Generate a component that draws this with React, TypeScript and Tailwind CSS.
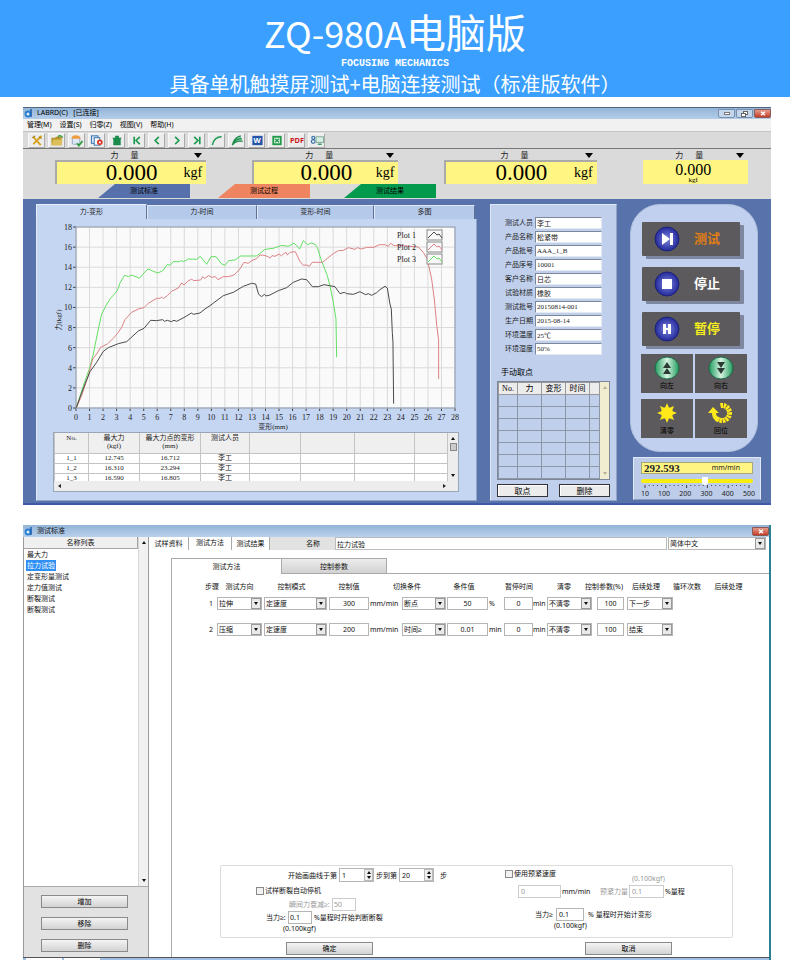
import { useState } from 'react';
import type { ReactNode } from 'react';
import clsx from 'clsx';

const SANS = "font-['Noto_Sans','Liberation_Sans','Noto_Sans_CJK_SC',sans-serif]";
const SERIF = "font-['Liberation_Serif','Noto_Sans_CJK_SC',serif]";

// Curve samples, three units per chart pixel
const PLOTS = [
  {
    name: 'Plot 1',
    color: '#4a4a4a',
    points:
      '139,626 150,595 165,555 180,518 200,490 220,457 235,446 265,434 290,428 325,396 342,388 362,364 380,365 398,362 404,367 412,364 424,368 432,364 440,367 465,354 484,342 490,346 510,342 525,330 540,320 580,290 610,280 640,262 665,253 677,255 686,286 695,293 703,286 708,291 720,288 745,275 770,266 790,250 815,240 830,242 847,263 865,263 882,257 915,263 930,284 943,280 950,284 970,286 990,278 1007,287 1015,284 1025,289 1040,281 1050,272 1065,262 1072,267 1080,315 1084,330 1087,400 1089,430 1091,614',
  },
  {
    name: 'Plot 2',
    color: '#dc8186',
    points:
      '139,626 155,590 175,530 188,480 200,465 212,445 232,435 250,418 265,400 275,385 285,362 305,340 325,330 342,326 355,313 380,298 390,298 395,294 400,299 412,290 425,277 445,267 455,252 462,258 472,248 485,240 490,245 512,243 518,233 524,238 536,230 545,235 556,233 564,242 580,233 595,233 612,228 630,210 642,190 655,193 665,185 680,179 690,168 702,169 715,173 720,178 726,170 735,172 748,165 754,171 760,165 768,160 772,168 780,160 796,158 810,187 820,199 830,198 838,202 847,190 878,190 892,178 910,164 925,155 940,154 955,146 975,151 982,146 995,150 1010,145 1032,145 1048,137 1065,137 1075,142 1082,133 1092,140 1120,140 1165,144 1180,160 1192,180 1205,240 1213,300 1220,375 1226,425 1226,540',
  },
  {
    name: 'Plot 3',
    color: '#62e062',
    points:
      '139,626 160,560 178,510 190,465 205,390 215,345 228,320 240,300 262,275 270,252 284,229 296,233 303,228 318,233 328,238 342,222 354,210 370,217 384,222 400,214 412,196 420,199 430,188 450,188 453,184 460,188 475,180 500,181 511,172 530,196 543,173 558,173 575,195 585,199 596,185 615,183 632,171 680,171 705,151 730,148 755,139 775,142 792,132 809,150 820,125 833,137 844,132 857,137 862,145 872,178 892,230 900,260 910,310 918,360 920,475',
  },
];

const RESULTS = [
  ['1_1', '12.745', '16.712', '李工'],
  ['1_2', '16.310', '23.294', '李工'],
  ['1_3', '16.590', '16.805', '李工'],
];

const FIELDS = [
  ['测试人员', '李工'],
  ['产品名称', '松紧带'],
  ['产品批号', 'AAA_1_B'],
  ['产品序号', '10001'],
  ['客户名称', '日芯'],
  ['试验材质', '橡胶'],
  ['测试批号', '20150814-001'],
  ['生产日期', '2015-08-14'],
  ['环境温度', '25℃'],
  ['环境湿度', '50%'],
];

const STANDARDS = ['最大力', '拉力试验', '定变形量测试', '定力值测试', '断裂测试', '断裂测试'];

const STEPS = [
  { dir: '拉伸', mode: '定速度', value: '300', cond: '断点', condValue: '50', condUnit: '%', pause: '0', next: '下一步' },
  { dir: '压缩', mode: '定速度', value: '200', cond: '时间≥', condValue: '0.01', condUnit: 'min', pause: '0', next: '结束' },
];

const STEP_HEADS = ['步骤', '测试方向', '控制模式', '控制值', '切换条件', '条件值', '暂停时间', '清零', '控制参数(%)', '后续处理', '循环次数', '后续处理'];

function AppIcon() {
  return (
    <svg viewBox="0 0 9 9" className="h-[9px] w-[9px] shrink-0">
      <circle cx="4" cy="5" r="3.4" fill="#2c7fd0" />
      <circle cx="4" cy="5" r="1.5" fill="#d9ecfa" />
      <path d="M7 0v8" stroke="#1c5fae" strokeWidth="1.5" />
    </svg>
  );
}

function CloseButton() {
  return (
    <button aria-label="关闭" className="flex h-[9px] w-[17px] items-center justify-center rounded-b-[2px] border border-[#8c5a55] bg-linear-to-b from-[#e39a8c] to-[#c43a26]">
      <svg viewBox="0 0 6 5" className="h-[5px] w-[6px]">
        <path d="M1 .7l4 3.6M5 .7L1 4.3" stroke="#fff" strokeWidth="1.4" />
      </svg>
    </button>
  );
}

const TOOL_ICONS: { label: string; icon: ReactNode }[] = [
  {
    label: '工具',
    icon: (
      <>
        <path d="M3 3l8 9M12 2l-9 9" stroke="#d8a21c" strokeWidth="2" />
        <path d="M2 4l3-2M9 3l3 2" stroke="#a87a10" strokeWidth="1.2" />
      </>
    ),
  },
  {
    label: '打开',
    icon: (
      <>
        <path d="M1 4h4l1-1h6v9H1z" fill="#b8942c" />
        <path d="M1 12l2-6h10l-1 6z" fill="#dcbf58" />
        <path d="M8 3c2-2 4-1 5 1" stroke="#3a9a3a" fill="none" strokeWidth="1.6" />
      </>
    ),
  },
  {
    label: '检查',
    icon: (
      <>
        <rect x="2" y="3" width="8" height="8" rx="1" fill="#dfe9f5" stroke="#8ea6bf" />
        <path d="M1 5c0-5 9-5 10 0z" fill="#ee9c3d" />
        <path d="M7 10l2 2.500 4-5" stroke="#2a9d3a" strokeWidth="1.8" fill="none" />
      </>
    ),
  },
  {
    label: '报告',
    icon: (
      <>
        <rect x="1" y="2" width="7" height="8" fill="#d8e9f8" stroke="#2c6ba8" />
        <rect x="4" y="4" width="6" height="8" fill="#fff" stroke="#2c6ba8" />
        <circle cx="10" cy="9" r="3" fill="#d63324" />
        <rect x="9" y="8" width="2" height="2" fill="#fff" />
      </>
    ),
  },
  { label: '清除', icon: <path d="M2 4h10l-1 2v6H3V6z M5 2h4v2H5z" fill="#1b8a4a" /> },
  { label: '首个', icon: <path d="M4 3v8M10 3L6 7l4 4" stroke="#1d9a52" strokeWidth="1.8" fill="none" /> },
  { label: '上一个', icon: <path d="M9 3L5 7l4 4" stroke="#1d9a52" strokeWidth="1.8" fill="none" /> },
  { label: '下一个', icon: <path d="M5 3l4 4-4 4" stroke="#1d9a52" strokeWidth="1.8" fill="none" /> },
  { label: '末个', icon: <path d="M10 3v8M4 3l4 4-4 4" stroke="#1d9a52" strokeWidth="1.8" fill="none" /> },
  { label: '曲线', icon: <path d="M2 12C3 7 6 3 12 3" stroke="#1d9a52" strokeWidth="1.6" fill="none" /> },
  {
    label: '多曲线',
    icon: (
      <>
        <path d="M2 12C3 6 6 3 11 2l2 5C8 7 4 9 2 12z" fill="#8fcfa8" />
        <path d="M2 12C3 7 6 3 11 2M2 12c1-4 4-7 10-7M2 12c2-3 5-5 11-4" stroke="#1d8a4a" strokeWidth="1.400" fill="none" />
      </>
    ),
  },
  {
    label: 'Word',
    icon: (
      <>
        <rect x="2" y="2" width="11" height="10" fill="#2455a8" />
        <text x="7" y="10" textAnchor="middle" fontSize="8" fontWeight="700" fill="#fff">W</text>
      </>
    ),
  },
  {
    label: 'Excel',
    icon: (
      <>
        <rect x="2" y="2" width="10" height="10" fill="#1f9a48" />
        <rect x="4" y="4" width="6" height="6" fill="#e8f6ec" />
        <path d="M5 5l4 4M9 5L5 9" stroke="#1f9a48" strokeWidth="1.500" />
      </>
    ),
  },
  { label: 'PDF', icon: <text x="7" y="10" textAnchor="middle" fontSize="8" fontWeight="700" fill="#cc1518">PDF</text> },
  {
    label: '设备',
    icon: (
      <>
        <circle cx="3" cy="4" r="1.600" fill="none" stroke="#2c6ba8" strokeWidth="1.200" />
        <circle cx="3" cy="8" r="2" fill="none" stroke="#2c6ba8" strokeWidth="1.200" />
        <rect x="6" y="3" width="8" height="6" fill="#d5efe4" stroke="#7da696" />
        <path d="M8 11h4" stroke="#2a8f5c" strokeWidth="1.500" />
      </>
    ),
  },
];

function Readout({ small }: { small?: boolean }) {
  return (
    <div>
      <div className="relative flex h-[11px] items-end justify-center gap-3 pr-3 text-[8px] leading-[10px] text-[#222]">
        <span>力</span>
        <span>量</span>
        <svg viewBox="0 0 8 5" className="absolute right-1 bottom-[2px] h-[5px] w-[8px]">
          <path d="M0 0h8L4 5z" fill="#000" />
        </svg>
      </div>
      <div
        className={clsx(
          'h-6 bg-[#fff582] text-black',
          SERIF,
          small ? 'flex flex-col items-center pr-1' : 'relative flex items-center justify-center border-t-2 border-l-2 border-[#aaa]'
        )}
      >
        <span className={small ? 'pt-[3px] text-[16px] leading-[14px]' : 'text-[23px] leading-6'}>0.000</span>
        <span className={small ? 'text-[7px] leading-[6px]' : 'absolute right-1 top-[3px] text-sm leading-4'}>kgf</span>
      </div>
    </div>
  );
}

function ForceChart() {
  const xs = Array.from({ length: 29 }, (_, i) => i);
  const ys = Array.from({ length: 10 }, (_, i) => i * 2);
  const px = (v: number) => 39 + (v * 379) / 28;
  const py = (v: number) => 189 - (v * 181) / 18;

  return (
    <svg viewBox="0 0 439 213" className={clsx('block w-full', SERIF)} fill="#222">
      <rect x="39" y="8" width="379" height="181" fill="#fafafa" />
      {xs.map((x) => (
        <g key={x}>
          <path d={`M${px(x)} 8V189`} stroke="#dadada" />
          <path d={`M${px(x)} 189v3`} stroke="#444" />
          <text x={px(x)} y="201" textAnchor="middle" fontSize="8">{x}</text>
        </g>
      ))}
      {ys.map((y) => (
        <g key={y}>
          <path d={`M39 ${py(y)}H418`} stroke="#dadada" />
          <path d={`M36 ${py(y)}h3`} stroke="#444" />
          <text x="35" y={py(y) + 3} textAnchor="end" fontSize="8">{y}</text>
        </g>
      ))}
      <rect x="39" y="8" width="379" height="181" fill="none" stroke="#8795aa" />
      <g transform="translate(-7 -20) scale(0.3333)" fill="none" strokeWidth="3" strokeLinejoin="round">
        {[...PLOTS].reverse().map((plot) => (
          <polyline key={plot.name} points={plot.points} stroke={plot.color} />
        ))}
      </g>
      {PLOTS.map((plot, i) => (
        <g key={plot.name} transform={`translate(360 ${11 + i * 12})`}>
          <text x="0" y="8" fontSize="8">{plot.name}</text>
          <rect x="30" y="0" width="15" height="10" fill="#fafafa" stroke="#888" />
          <path d="M31 8l6-6 3 3 2-1 3 4" fill="none" stroke={plot.color} />
        </g>
      ))}
      <text x="236" y="210" textAnchor="middle" fontSize="7">变形(mm)</text>
      <text x="24" y="101" textAnchor="middle" fontSize="7" transform="rotate(-90 24 101)">力(kgf)</text>
    </svg>
  );
}

function ResultTable() {
  return (
    <div className={clsx('mr-[17px] ml-4 border border-[#9aa5b8] bg-[#ededed] text-[7px] text-[#222]', SERIF)}>
      <div className="flex">
        <div className="h-12 flex-1 overflow-hidden bg-white">
          <table className="w-full table-fixed border-collapse text-center">
            <colgroup>
              <col className="w-[34px]" />
              <col className="w-[51px]" />
              <col className="w-[61px]" />
              <col className="w-[49px]" />
              <col className="w-[51px]" />
              <col className="w-[54px]" />
              <col className="w-[60px]" />
              <col />
            </colgroup>
            <thead>
              <tr className="h-5 bg-[#efefef] align-top leading-[8px] [&>th]:border [&>th]:border-t-0 [&>th]:border-[#c4c4c4] [&>th]:pt-px [&>th]:font-normal">
                <th>No.</th>
                <th>最大力<br />(kgf)</th>
                <th>最大力点的变形<br />(mm)</th>
                <th>测试人员</th>
                <th />
                <th />
                <th />
                <th />
              </tr>
            </thead>
            <tbody>
              {RESULTS.map((row) => (
                <tr key={row[0]} className="h-[10px] leading-[9px] [&>td]:border [&>td]:border-[#c4c4c4]">
                  {row.map((cell) => (
                    <td key={cell}>{cell}</td>
                  ))}
                  <td />
                  <td />
                  <td />
                  <td />
                </tr>
              ))}
            </tbody>
          </table>
        </div>
        <div className="flex w-[10px] flex-col items-center justify-between py-1">
          <Triangle up />
          <div className="-mt-5 h-[8px] w-[7px] border border-[#888] bg-[#ccc]" />
          <Triangle />
        </div>
      </div>
      <div className="flex h-[10px] items-center justify-between px-1 pr-3">
        <svg viewBox="0 0 3 4" className="h-1 w-[3px]"><path d="M3 0v4L0 2z" fill="#222" /></svg>
        <svg viewBox="0 0 3 4" className="h-1 w-[3px]"><path d="M0 0v4l3-2z" fill="#222" /></svg>
      </div>
    </div>
  );
}

function Triangle({ up, light }: { up?: boolean; light?: boolean }) {
  return (
    <svg viewBox="0 0 4 3" className={clsx('h-[3px] w-1 shrink-0', up && 'rotate-180')}>
      <path d="M0 0h4L2 3z" fill={light ? '#b5b29b' : '#111'} />
    </svg>
  );
}

const CHART_TABS = ['力-变形', '力-时间', '变形-时间', '多图'];

function ChartPanel() {
  const [tab, setTab] = useState(0);

  return (
    <section className="min-w-0 flex-1">
      <div className="grid grid-cols-[111fr_110fr_117fr_101fr] items-end pr-[2px]">
        {CHART_TABS.map((name, i) => (
          <button
            key={name}
            onClick={() => setTab(i)}
            className={clsx(
              'border-l border-t border-r border-r-[#5f7296] text-[7px] text-[#222]',
              i === tab ? 'h-[15px] border-[#e6eefc] bg-[#c5d6f3]' : 'h-[14px] border-[#e0e9fa] bg-[#b5c9ea]'
            )}
          >
            {name}
          </button>
        ))}
      </div>
      <div className="border border-t-0 border-[#dfe8f8] border-r-[#93a5c6] border-b-[#93a5c6] bg-[#c5d6f3] pb-[8px]">
        <ForceChart />
        <ResultTable />
      </div>
    </section>
  );
}

function FormPanel() {
  return (
    <section className="w-[127px] shrink-0 border border-[#dfe8f8] border-r-[#93a5c6] border-b-[#93a5c6] bg-[#bfcfec] px-[6px] pt-3 pb-[3px]">
      <div className="flex flex-col gap-[2px] pr-2 pl-2">
        {FIELDS.map(([label, value]) => (
          <label key={label} className="flex h-3 items-center text-[7px] text-[#222]">
            <span className="w-[30px] shrink-0 whitespace-nowrap">{label}</span>
            <input
              defaultValue={value}
              className={clsx('h-3 w-full min-w-0 border border-[#e4e9f2] border-t-[#7c8799] border-l-[#7c8799] bg-white px-px text-[7px] leading-[9px]', SERIF)}
            />
          </label>
        ))}
      </div>
      <h2 className="mt-3 pl-1 text-[8px] leading-[10px]">手动取点</h2>
      <div className="mt-1 flex border border-[#7c8799]">
        <table className="flex-1 table-fixed border-collapse text-[8px]">
          <thead>
            <tr className={clsx('h-3 leading-[10px] [&>th]:border [&>th]:border-[#999] [&>th]:bg-[#ececec] [&>th]:font-normal', SERIF)}>
              <th className="w-[19px]">No.</th>
              <th className="w-6">力</th>
              <th className="w-6">变形</th>
              <th className="w-6">时间</th>
              <th />
            </tr>
          </thead>
          <tbody>
            {[1, 2, 3, 4, 5, 6, 7].map((n) => (
              <tr key={n} className="h-3 [&>td]:border [&>td]:border-[#8e97a8]">
                <td />
                <td />
                <td />
                <td />
                <td />
              </tr>
            ))}
          </tbody>
        </table>
        <div className="flex w-[9px] flex-col items-center justify-between bg-[#f0edd0] py-1">
          <Triangle up light />
          <Triangle light />
        </div>
      </div>
      <div className="mt-1 flex justify-between text-[8px] leading-[10px]">
        <button className="h-[13px] w-[51px] border border-[#333] bg-[#ececec] shadow-[inset_1px_1px_0_#fff]">取点</button>
        <button className="h-[13px] w-[51px] border border-[#333] bg-[#ececec] shadow-[inset_1px_1px_0_#fff]">删除</button>
      </div>
    </section>
  );
}

const BIG_BUTTONS = [
  { name: '测试', color: 'text-[#e07d14]', icon: <path d="M8 7l8 6-8 6zM16 7h3v12h-3z" fill="#fff" /> },
  { name: '停止', color: 'text-white', icon: <path d="M8 8h10v10H8z" fill="#fff" /> },
  { name: '暂停', color: 'text-[#f4ee1c]', icon: <path d="M9 8h3v4h2V8h3v10h-3v-4h-2v4H9z" fill="#fff" /> },
];

// Dashes of the return arrow, going clockwise from the top
const RING = [0, 24, 48, 72, 96, 120, 144, 168, 192, 216];

const SMALL_BUTTONS = [
  {
    name: '向左',
    icon: (
      <>
        <ellipse cx="13" cy="13" rx="12" ry="11" fill="url(#green)" stroke="#1c6b47" />
        <path d="M13 7l4 6H9zM13 13l4 6H9z" fill="#2d3b35" />
      </>
    ),
  },
  {
    name: '向右',
    icon: (
      <>
        <ellipse cx="13" cy="13" rx="12" ry="11" fill="url(#green)" stroke="#1c6b47" />
        <path d="M13 13L9 7h8zM13 19l-4-6h8z" fill="#2d3b35" />
      </>
    ),
  },
  {
    name: '清零',
    icon: (
      <g fill="#ffe91a">
        <circle cx="13" cy="13" r="6" />
        {[0, 45, 90, 135, 180, 225, 270, 315].map((a) => (
          <path key={a} d="M13 3l2 5h-4z" transform={`rotate(${a} 13 13)`} />
        ))}
      </g>
    ),
  },
  {
    name: '回位',
    icon: (
      <g fill="#ffe91a">
        {RING.map((a) => (
          <path key={a} d="M12 3h3v5h-2z" transform={`rotate(${a} 14 13)`} />
        ))}
        <path d="M0 13l5-6 6 6H8c0 3 2 4 4 5l-2 4c-3-1-6-4-6-9z" />
      </g>
    ),
  },
];

function ControlPanel() {
  const [speed, setSpeed] = useState(292.593);

  return (
    <section className="w-[131px] shrink-0">
      <svg className="absolute h-0 w-0">
        <defs>
          <linearGradient id="green">
            <stop offset="0" stopColor="#1f9a5c" />
            <stop offset="0.5" stopColor="#d6f5e2" />
            <stop offset="1" stopColor="#1f9a5c" />
          </linearGradient>
          <radialGradient id="blue">
            <stop offset="0" stopColor="#7d86e0" />
            <stop offset="1" stopColor="#23299a" />
          </radialGradient>
        </defs>
      </svg>
      <div className="mr-[3px] rounded-[30px] border border-[#aebfde] bg-[#c0d0ee] px-[10px] pt-[17px] pb-[13px]">
        <div className="flex flex-col gap-[11px] pl-px pr-[7px]">
          {BIG_BUTTONS.map((b) => (
            <button
              key={b.name}
              className={clsx('flex h-[34px] items-center gap-[14px] rounded-[1px] bg-[#5c5a5c] pl-3 text-[13px] font-bold shadow-[4px_3px_0_#7f87a0]', b.color)}
            >
              <svg viewBox="0 0 26 26" className="h-[26px] w-[26px]">
                <circle cx="13" cy="13" r="12" fill="url(#blue)" stroke="#1d2374" />
                {b.icon}
              </svg>
              {b.name}
            </button>
          ))}
        </div>
        <div className="mt-2 grid grid-cols-2 gap-x-[2px] gap-y-[6px]">
          {SMALL_BUTTONS.map((b) => (
            <button key={b.name} className="flex h-[39px] flex-col items-center bg-[#5c5a5c] pt-px text-[7px] leading-[10px] text-black">
              <svg viewBox="0 0 26 26" className="h-[26px] w-[26px]">{b.icon}</svg>
              {b.name}
            </button>
          ))}
        </div>
      </div>
      <div className="mt-[5px] ml-[3px] h-[43px] border border-[#e1e9f8] border-b-[#8b9cbf] bg-[#bccce9] px-[7px] pt-1 text-[#222]">
        <div className="flex h-3 items-center justify-between border border-[#a9a777] bg-[#fff582] pr-3 pl-[2px]">
          <span className="font-['Liberation_Serif',serif] text-[11px] leading-[11px] font-bold">{speed.toFixed(3)}</span>
          <span className="text-[7px] leading-[10px]">mm/min</span>
        </div>
        <input
          type="range"
          aria-label="速度"
          min={10}
          max={500}
          step="any"
          value={speed}
          onChange={(e) => setSpeed(Number(e.target.value))}
          className="mt-[3px] block h-2 w-full appearance-none bg-transparent [&::-webkit-slider-runnable-track]:h-1 [&::-webkit-slider-runnable-track]:rounded-full [&::-webkit-slider-runnable-track]:bg-[#f7ee10] [&::-webkit-slider-thumb]:-mt-[2px] [&::-webkit-slider-thumb]:h-2 [&::-webkit-slider-thumb]:w-[6px] [&::-webkit-slider-thumb]:appearance-none [&::-webkit-slider-thumb]:rounded-b-full [&::-webkit-slider-thumb]:bg-white"
        />
        <svg viewBox="0 0 112 14" className="block w-full overflow-visible" fill="#222">
          {Array.from({ length: 26 }, (_, i) => (
            <path key={i} d={`M${4 + i * 4.16} 0v${i % 5 === 0 ? 3 : 1}`} stroke="#444" />
          ))}
          {[10, 100, 200, 300, 400, 500].map((v) => (
            <text key={v} x={4 + ((v - 10) * 104) / 490} y="11" textAnchor="middle" fontSize="7">{v}</text>
          ))}
        </svg>
      </div>
    </section>
  );
}

const MODE_TABS = [
  { name: '测试标准', color: 'bg-[#5670ab]' },
  { name: '测试过程', color: 'bg-[#ee8460]' },
  { name: '测试结果', color: 'bg-[#049a4e]' },
];

function MainWindow() {
  return (
    <section className="mt-[10px] mr-[19px] ml-[23px] bg-[#dadada]">
      <header className="flex h-3 items-center gap-1 border-t border-[#4f6580] bg-linear-to-b from-[#94b5d8] to-[#b4cde9] pl-px text-[7px] text-black">
        <AppIcon />
        <span className="whitespace-pre">LABRD(C)   [已连接]</span>
        <div className="ml-auto flex gap-px">
          <button aria-label="最小化" className="flex h-[9px] w-[17px] items-center justify-center rounded-b-[2px] border border-[#7890ae] bg-[#c3d6ec]">
            <span className="h-[3px] w-[6px] border border-[#777] bg-white" />
          </button>
          <button aria-label="还原" className="flex h-[9px] w-[17px] items-center justify-center rounded-b-[2px] border border-[#7890ae] bg-[#c3d6ec]">
            <svg viewBox="0 0 7 6" className="h-[6px] w-[7px]" fill="#fff" stroke="#666">
              <rect x="2.500" y=".5" width="4" height="3" />
              <rect x=".5" y="2.500" width="4" height="3" />
            </svg>
          </button>
          <CloseButton />
        </div>
      </header>
      <nav className="flex h-[13px] items-center gap-2 border-b border-[#c5c5c5] bg-[#f1f1f1] pl-1 text-[7px] text-black">
        {['管理(M)', '设置(S)', '归零(Z)', '视图(V)', '帮助(H)'].map((m) => (
          <button key={m}>{m}</button>
        ))}
      </nav>
      <div className="flex h-[17px] items-center gap-[3px] border-b border-[#777] pl-[5px]">
        {TOOL_ICONS.map((t) => (
          <button key={t.label} aria-label={t.label} className="flex h-[15px] w-[17px] items-center justify-center border border-[#f8f8f8] border-r-[#aaa] border-b-[#aaa] bg-[#ececec]">
            <svg viewBox="0 0 14 14" className="h-[13px] w-[14px] overflow-visible">{t.icon}</svg>
          </button>
        ))}
      </div>
      <div className="grid h-[35px] grid-cols-[152fr_147fr_153fr_106fr] gap-x-[46px] pr-[23px] pl-8">
        <Readout />
        <Readout />
        <Readout />
        <Readout small />
      </div>
      <div className="grid h-[15px] grid-cols-[120px_126px_92px] pl-[75px]">
        {MODE_TABS.map((t) => (
          <button
            key={t.name}
            className={clsx('h-[14px] w-[92px] text-[7px] leading-[14px] text-black [clip-path:polygon(17px_0,100%_0,100%_100%,0_100%)]', t.color)}
          >
            {t.name}
          </button>
        ))}
      </div>
      <div className="flex gap-[13px] border-b-2 border-[#3f58a8] bg-[#5872ab] pt-[5px] pr-[10px] pb-[2px] pl-[13px]">
        <ChartPanel />
        <FormPanel />
        <ControlPanel />
      </div>
    </section>
  );
}

function Combo({ value, label, className }: { value: string; label: string; className?: string }) {
  return (
    <div className={clsx('relative h-[13px] border border-[#b5b5b5] bg-white', className)}>
      <select
        aria-label={label}
        defaultValue={value}
        className="block h-[11px] w-full appearance-none bg-white pr-[10px] pl-px text-[7px] leading-[11px]"
      >
        <option>{value}</option>
      </select>
      <span className="pointer-events-none absolute top-0 right-0 flex h-[11px] w-[10px] items-center justify-center border border-[#999] bg-[#e9e9e9]">
        <Triangle />
      </span>
    </div>
  );
}

function Num({ value, label, className, disabled }: { value: string; label: string; className?: string; disabled?: boolean }) {
  return (
    <input
      aria-label={label}
      defaultValue={value}
      disabled={disabled}
      className={clsx('h-[13px] border border-[#b5b5b5] bg-white text-[7px] leading-[11px] disabled:border-[#ccc] disabled:text-[#999]', className)}
    />
  );
}

function Spin({ value, label }: { value: string; label: string }) {
  return (
    <div className="flex h-[14px] w-[35px] border border-[#b5b5b5]">
      <input aria-label={label} defaultValue={value} className="w-6 min-w-0 flex-1 pl-[2px] text-[7px]" />
      <span className="flex w-[9px] flex-col items-center justify-center gap-[2px] border border-[#bbb] bg-[#eee]">
        <Triangle up />
        <Triangle />
      </span>
    </div>
  );
}

function StepRow({ step, index }: { step: (typeof STEPS)[number]; index: number }) {
  return (
    <div className="grid h-[13px] grid-cols-[15px_47px_65px_41px_32px_45px_42px_15px_29px_14px_50px_30px_46px] items-center whitespace-nowrap">
      <span className="pr-1 text-right">{index}</span>
      <Combo label="测试方向" value={step.dir} className="w-[45px]" />
      <Combo label="控制模式" value={step.mode} className="w-[63px]" />
      <Num label="控制值" value={step.value} className="w-10 text-center" />
      <span>mm/min</span>
      <Combo label="切换条件" value={step.cond} className="w-11" />
      <Num label="条件值" value={step.condValue} className="w-[41px] text-center" />
      <span>{step.condUnit}</span>
      <Num label="暂停时间" value={step.pause} className="w-[29px] text-center" />
      <span>min</span>
      <Combo label="清零" value="不清零" className="w-[45px]" />
      <Num label="控制参数" value="100" className="w-[27px] text-center" />
      <Combo label="后续处理" value={step.next} className="w-[46px]" />
    </div>
  );
}

function GrayButton({ children }: { children: string }) {
  return (
    <button className="h-[13px] w-[87px] border border-[#8a8a8a] bg-linear-to-b from-[#f4f4f4] to-[#d3d3d3] text-[7px] leading-[11px] text-black">
      {children}
    </button>
  );
}

function OptionsBox() {
  return (
    <div className="mr-9 ml-[48px] grid h-[73px] grid-cols-[284px_1fr] rounded-[2px] border border-[#dcdcdc] pt-[2px] whitespace-nowrap">
      <div>
        <div className="flex h-[14px] items-center gap-[2px] pl-[67px]">
          开始画曲线于第
          <Spin label="开始步" value="1" />
          步到第
          <Spin label="结束步" value="20" />
          <span className="pl-1">步</span>
        </div>
        <label className="mt-[2px] flex h-[13px] items-center gap-px pl-[35px]">
          <input type="checkbox" className="h-2 w-2 appearance-none border border-[#8a8a8a] bg-[#f2f2f2]" />
          试样断裂自动停机
        </label>
        <div className="flex h-[14px] items-center pl-[68px] text-[#999]">
          <span className="w-[43px]">瞬间力衰减≥:</span>
          <Num label="瞬间力衰减" value="50" disabled className="w-6 pl-px" />
        </div>
        <div className="flex h-[13px] items-center pl-[45px]">
          <span className="w-[22px]">当力≥:</span>
          <Num label="当力" value="0.1" className="mr-[2px] w-6 pl-px" />
          %量程时开始判断断裂
        </div>
        <div className="pl-[62px] leading-[9px]">(0.100kgf)</div>
      </div>
      <div>
        <div className="flex h-4">
          <label className="flex h-[11px] w-[127px] items-center gap-px">
            <input type="checkbox" className="h-2 w-2 appearance-none border border-[#8a8a8a] bg-[#f2f2f2]" />
            使用预紧速度
          </label>
          <span className="self-end text-[#999]">(0.100kgf)</span>
        </div>
        <div className="flex h-[14px] items-center pl-[13px]">
          <Num label="预紧速度" value="0" disabled className="mr-px w-[43px] pl-[2px]" />
          <span className="w-[38px]">mm/min</span>
          <span className="w-[29px] text-[#999]">预紧力量</span>
          <Num label="预紧力量" value="0.1" disabled className="mr-px w-[35px] pl-[2px]" />
          %量程
        </div>
        <div className="mt-[9px] flex h-[14px] items-center pl-[30px]">
          <span className="w-[21px]">当力≥</span>
          <Num label="开始计变形力" value="0.1" className="mr-1 w-7 pl-[2px]" />
          % 量程时开始计变形
        </div>
        <div className="pl-[49px] leading-[9px]">(0.100kgf)</div>
      </div>
    </div>
  );
}

function StandardWindow() {
  const [selected, setSelected] = useState(1);

  return (
    <section className="mt-5 mr-[19px] ml-[23px] border-r-2 border-[#2b7f94] bg-white text-[7px] text-[#111]">
      <header className="flex h-3 items-center gap-1 bg-linear-to-b from-[#93b4d8] to-[#b9d1ec] pl-px">
        <AppIcon />
        测试标准
        <div className="ml-auto"><CloseButton /></div>
      </header>
      <div className="flex min-h-[420px] leading-[11px]">
        <aside className="flex w-[126px] shrink-0 flex-col border-x border-[#9a9a9a] bg-[#e2e2e2]">
          <div className="flex flex-1 border-b border-[#aaa] bg-white">
            <div className="flex-1">
              <h2 className="h-3 border-r border-b border-[#a5a5a5] bg-[#f0f0f0] text-center">名称列表</h2>
              <ul>
                {STANDARDS.map((name, i) => (
                  <li key={i} className="flex">
                    <button
                      onClick={() => setSelected(i)}
                      className={clsx('ml-[2px] h-[11px] px-px', i === selected ? 'bg-[#2f8ff5] text-white' : '')}
                    >
                      {name}
                    </button>
                  </li>
                ))}
              </ul>
            </div>
            <div className="flex w-[10px] flex-col items-center justify-between border-l border-[#d5d5d5] bg-[#f1f1f1] py-1">
              <Triangle up />
              <Triangle />
            </div>
          </div>
          <div className="flex flex-col items-center gap-[9px] pt-2 pb-[5px] pr-[3px]">
            <GrayButton>增加</GrayButton>
            <GrayButton>移除</GrayButton>
            <GrayButton>删除</GrayButton>
          </div>
        </aside>
        <div className="flex min-w-0 flex-1 flex-col">
          <div className="flex h-[14px] items-start">
            <button className="h-[13px] w-10 border-r border-[#aaa]">试样资料</button>
            <button className="h-[13px] w-[43px] border-r border-[#aaa] pb-[3px]">测试方法</button>
            <button className="h-[13px] w-[38px] border-r border-[#aaa]">测试结果</button>
            <label className="flex h-[13px] flex-1 items-center bg-[#e2e2e2]">
              <span className="w-[65px] shrink-0 pl-9">名称</span>
              <input defaultValue="拉力试验" className="h-[13px] w-full border border-[#bbb] bg-white pl-px text-[7px]" />
            </label>
            <Combo label="语言" value="简体中文" className="mr-[3px] ml-px w-[98px]" />
          </div>
          <div className="mt-[7px] ml-[22px] flex flex-1 flex-col border-l border-[#aaa]">
            <div className="flex h-4 items-end">
              <button className="h-4 w-[109px] border-t border-[#aaa]">测试方法</button>
              <button className="h-4 w-[106px] border border-[#aaa] bg-linear-to-b from-[#ececec] to-[#d2d2d2]">控制参数</button>
              <div className="flex-1 self-stretch border-b border-[#aaa]" />
            </div>
            <div className="pt-[7px] pl-[30px]">
              <div className="grid h-[12px] grid-cols-[20px_35px_69px_46px_70px_44px_66px_24px_56px_28px_54px_29px] whitespace-nowrap">
                {STEP_HEADS.map((h, i) => (
                  <span key={i} className="flex justify-center">{h}</span>
                ))}
              </div>
              <div className="mt-1 flex flex-col gap-[13px]">
                {STEPS.map((step, i) => (
                  <StepRow key={i} step={step} index={i + 1} />
                ))}
              </div>
            </div>
            <div className="mt-auto">
              <OptionsBox />
              <div className="mt-1 mb-[2px] flex gap-[212px] pl-[114px]">
                <GrayButton>确定</GrayButton>
                <GrayButton>取消</GrayButton>
              </div>
            </div>
          </div>
        </div>
      </div>
      <footer className="flex h-[3px] gap-[2px] border-t border-[#555] bg-[#9fc0e4] pl-[3px]">
        <span className="w-9 bg-white" />
        <span className="w-9 bg-white" />
      </footer>
    </section>
  );
}

export default function App() {
  return (
    <main className={clsx('bg-white pb-[10px]', SANS)}>
      <header className="flex h-[97px] flex-col items-center bg-[#3a9fff] text-white">
        <h1 className="pt-2 font-['Noto_Sans_CJK_SC',sans-serif] text-[40px] leading-[46px]">
          <span className="text-[36px]">ZQ-980A</span>电脑版
        </h1>
        <p className="mt-1 font-['Liberation_Mono',monospace] text-[10px] leading-[10px] font-bold">FOCUSING MECHANICS</p>
        <p className="mt-[3px] font-['Noto_Sans_CJK_SC',sans-serif] text-[20px] leading-6">具备单机触摸屏测试+电脑连接测试（标准版软件）</p>
      </header>
      <MainWindow />
      <StandardWindow />
    </main>
  );
}
